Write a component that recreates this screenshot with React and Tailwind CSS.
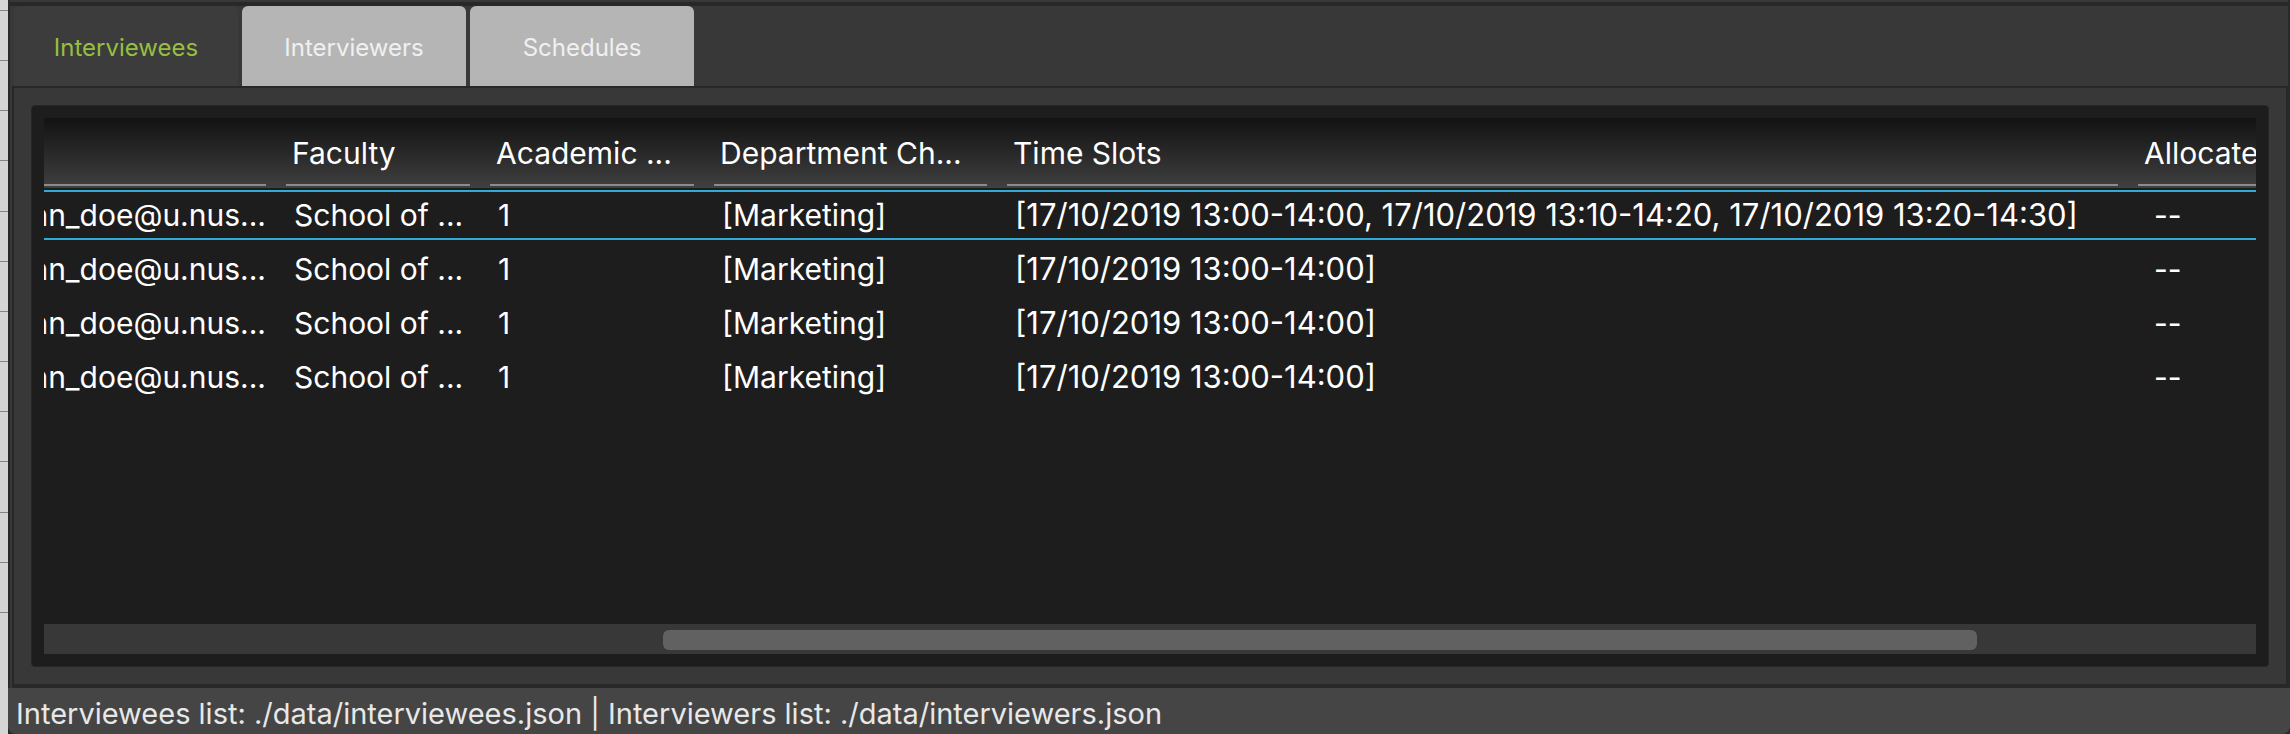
import { useState } from "react";

const tabs = ["Interviewees", "Interviewers", "Schedules"];

const columns = [
  { label: "", width: "w-[232px]" },
  { label: "Faculty", width: "w-[204px]" },
  { label: "Academic ...", width: "w-[224px]" },
  { label: "Department Ch...", width: "w-[293px]" },
  { label: "Time Slots", width: "" },
  { label: "Allocated", width: "w-[128px]" },
];

const person = {
  email: "john_doe@u.nus...",
  faculty: "School of ...",
  year: "1",
  department: "[Marketing]",
  slots: "[17/10/2019 13:00-14:00]",
  allocated: "--",
};

const rows = [
  {
    ...person,
    slots:
      "[17/10/2019 13:00-14:00, 17/10/2019 13:10-14:20, 17/10/2019 13:20-14:30]",
  },
  person,
  person,
  person,
];

function Cell({ children, selected, className = "pl-[18px]" }) {
  return (
    <td
      className={`overflow-hidden py-0 whitespace-nowrap ${className} ${
        selected ? "h-[50px] border-y-2 border-[#30abd8]" : "h-[54px]"
      }`}
    >
      {children}
    </td>
  );
}

function headerSpacing(index) {
  if (index === 0) return "mr-[10px]";
  if (index === columns.length - 1) return "ml-[10px] pl-[6px]";
  return "mx-[10px] pl-[6px]";
}

function InterviewTable() {
  return (
    <table className="w-full table-fixed border-separate border-spacing-0 text-[30px] leading-9 text-white">
      <colgroup>
        {columns.map((c, i) => (
          <col key={i} className={c.width} />
        ))}
      </colgroup>
      <thead>
        <tr className="h-[70px] bg-linear-to-b from-[#131313] to-[#404040]">
          {columns.map((c, i) => (
            <th
              key={i}
              scope="col"
              className="overflow-hidden p-0 text-left align-bottom font-normal"
            >
              <div
                className={`mb-[2px] h-[51px] overflow-hidden border-b-2 border-[#8b8b8b] whitespace-nowrap ${headerSpacing(i)}`}
              >
                {c.label}
              </div>
            </th>
          ))}
        </tr>
        <tr aria-hidden="true" className="h-[2px]" />
      </thead>
      {rows.map((r, i) => {
        const selected = i === 0;
        return (
          <tbody key={i}>
            <tr aria-selected={selected}>
              <Cell selected={selected} className="pr-[10px]">
                <div className="flex justify-end overflow-hidden">{r.email}</div>
              </Cell>
              <Cell selected={selected}>{r.faculty}</Cell>
              <Cell selected={selected}>{r.year}</Cell>
              <Cell selected={selected}>{r.department}</Cell>
              <Cell selected={selected} className="pl-[18px] text-[31px]">
                {r.slots}
              </Cell>
              <Cell selected={selected} className="pl-[26px]">
                {r.allocated}
              </Cell>
            </tr>
            {selected && <tr aria-hidden="true" className="h-[2px]" />}
          </tbody>
        );
      })}
    </table>
  );
}

function BackdropStrip() {
  return (
    <div className="w-2 shrink-0 bg-[#d5d5d5] pt-[10px]">
      {Array.from({ length: 13 }, (_, i) => (
        <div
          key={i}
          className={`border-t border-[#858585] ${i === 3 || i === 9 ? "h-[51px]" : "h-[50px]"}`}
        />
      ))}
    </div>
  );
}

export default function App() {
  const [active, setActive] = useState(0);

  return (
    <div className="flex min-h-screen bg-[#2b2b2b] font-['Inter','Liberation_Sans',sans-serif]">
      <BackdropStrip />
      <main className="flex min-w-0 grow flex-col">
        <div className="flex grow flex-col border-x-2 border-[#2a2a2a] bg-[#383838] pt-[2px]">
          <div className="h-1 bg-[#282828]" />
          <div role="tablist" className="flex gap-1 pl-1">
            {tabs.map((t, i) => (
              <button
                key={t}
                type="button"
                role="tab"
                aria-selected={i === active}
                onClick={() => setActive(i)}
                className={`h-20 w-56 rounded-t-md pt-1 text-2xl ${
                  i === active
                    ? "bg-[#3c3c3c] text-[#96bf41]"
                    : "bg-[#b5b5b5] text-[#f0f0f0]"
                }`}
              >
                {t}
              </button>
            ))}
          </div>
          <section
            role="tabpanel"
            aria-label={tabs[active]}
            className="ml-[2px] flex grow flex-col border-2 border-b-4 border-[#282828] px-[17px] py-[17px]"
          >
            <div className="flex grow flex-col rounded border border-[#262626] bg-[#1d1d1d] px-3 py-3">
              <div className="grow">
                <InterviewTable />
              </div>
              <div
                role="scrollbar"
                aria-orientation="horizontal"
                aria-valuenow={69}
                aria-label="Scroll columns"
                className="h-[30px] bg-[#383838] pt-[6px] pb-1"
              >
                <div className="ml-[28%] h-5 w-[59.4%] rounded-md bg-[#616161]" />
              </div>
            </div>
          </section>
        </div>
        <footer className="h-[46px] rounded-b-lg bg-[#454545] pl-2 text-[29px] leading-[52px] whitespace-nowrap text-[#e8e8e8]">
          Interviewees list: ./data/interviewees.json | Interviewers list: ./data/interviewers.json
        </footer>
      </main>
    </div>
  );
}
